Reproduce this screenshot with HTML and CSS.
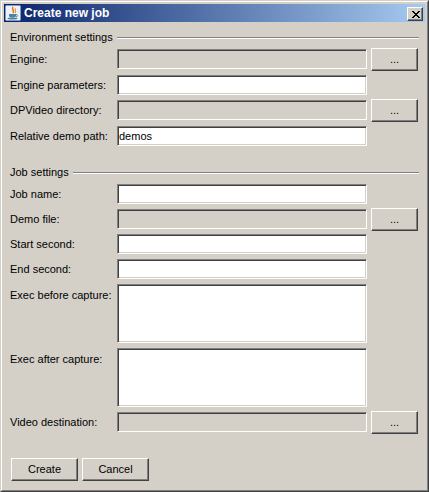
FILE: index.html
```html
<!DOCTYPE html>
<html>
<head>
<meta charset="utf-8">
<title>Create new job</title>
<link rel="stylesheet" href="styles.css">
</head>
<body>
<div class="window">
  <div class="frame">
    <div class="titlebar">
      <svg class="app-icon" viewBox="0 0 16 16" width="16" height="16">
        <rect x="0.5" y="0.5" width="15" height="15" rx="1" fill="#EEF2F8" stroke="#7F9AC8"/>
        <path d="M8 2 C6 4 10 5 8 8" stroke="#E76F00" stroke-width="1.5" fill="none"/>
        <path d="M10.5 3.5 C9.5 5 11.5 6 10 8" stroke="#E76F00" stroke-width="1" fill="none"/>
        <path d="M4 9 h7 v1.5 a3 2 0 0 1 -3 2 h-1 a3 2 0 0 1 -3 -2z" fill="#5382A1"/>
        <path d="M11 9.5 a1.5 1.2 0 0 1 0 2.4" stroke="#5382A1" fill="none"/>
        <ellipse cx="7.5" cy="13.6" rx="5" ry="1" fill="#5382A1"/>
      </svg>
      <span class="title">Create new job</span>
      <div class="close-btn">
        <svg class="close-x" viewBox="0 0 8 7" width="8" height="7" shape-rendering="crispEdges">
          <path d="M0 0h2v1H0z M6 0h2v1H6z M1 1h2v1H1z M5 1h2v1H5z M2 2h4v1H2z M3 3h2v1H3z M2 4h4v1H2z M1 5h2v1H1z M5 5h2v1H5z M0 6h2v1H0z M6 6h2v1H6z" fill="#000"/>
        </svg>
      </div>
    </div>
    <div class="content">
      <div class="section-head">
        <span class="section-title">Environment settings</span>
        <div class="rule"></div>
      </div>
      <div class="rows env">
        <div class="row">
          <div class="label">Engine:</div>
          <div class="field disabled"></div>
          <div class="btn browse">...</div>
        </div>
        <div class="row">
          <div class="label">Engine parameters:</div>
          <div class="field"></div>
        </div>
        <div class="row">
          <div class="label">DPVideo directory:</div>
          <div class="field disabled"></div>
          <div class="btn browse">...</div>
        </div>
        <div class="row">
          <div class="label">Relative demo path:</div>
          <div class="field">demos</div>
        </div>
      </div>

      <div class="section-head job-head">
        <span class="section-title">Job settings</span>
        <div class="rule"></div>
      </div>
      <div class="rows job">
        <div class="row">
          <div class="label">Job name:</div>
          <div class="field"></div>
        </div>
        <div class="row">
          <div class="label">Demo file:</div>
          <div class="field disabled"></div>
          <div class="btn browse">...</div>
        </div>
        <div class="row">
          <div class="label">Start second:</div>
          <div class="field"></div>
        </div>
        <div class="row">
          <div class="label">End second:</div>
          <div class="field"></div>
        </div>
        <div class="row tall">
          <div class="label">Exec before capture:</div>
          <div class="field area"></div>
        </div>
        <div class="row tall">
          <div class="label">Exec after capture:</div>
          <div class="field area"></div>
        </div>
        <div class="row">
          <div class="label">Video destination:</div>
          <div class="field disabled"></div>
          <div class="btn browse">...</div>
        </div>
      </div>

      <div class="actions">
        <div class="btn action">Create</div>
        <div class="btn action">Cancel</div>
      </div>
    </div>
  </div>
</div>
</body>
</html>
```

FILE: styles.css
```css
html, body {
  margin: 0;
  padding: 0;
}

body {
  width: 429px;
  height: 492px;
  background: #D4D0C8;
  font-family: "Liberation Sans", Arial, sans-serif;
  font-size: 11px;
  color: #000;
}

.window {
  box-sizing: border-box;
  width: 429px;
  height: 492px;
  border: 1px solid;
  border-color: #D4D0C8 #404040 #404040 #D4D0C8;
}

.frame {
  box-sizing: border-box;
  height: 100%;
  border: 1px solid;
  border-color: #FFFFFF #808080 #808080 #FFFFFF;
  padding: 2px;
  display: flex;
  flex-direction: column;
  background: #D4D0C8;
}

.titlebar {
  flex-shrink: 0;
  height: 18px;
  display: flex;
  align-items: center;
  background: linear-gradient(to right, #0A246A, #A6CAF0);
}

.app-icon {
  flex-shrink: 0;
  margin-left: 1px;
  margin-right: 3px;
  display: block;
}

.title {
  flex: 1;
  color: #FFFFFF;
  font-weight: bold;
  font-size: 12px;
  line-height: 18px;
  white-space: nowrap;
}

.close-btn {
  box-sizing: border-box;
  width: 16px;
  height: 14px;
  align-self: flex-start;
  margin-top: 3px;
  margin-right: 2px;
  border: 1px solid;
  border-color: #FFFFFF #404040 #404040 #FFFFFF;
  box-shadow: inset -1px -1px #808080;
  background: #D4D0C8;
  display: flex;
  align-items: center;
  justify-content: center;
}

.close-x {
  display: block;
  margin-left: 1px;
}

.content {
  flex: 1;
  padding: 8px 7px 0 6px;
  display: flex;
  flex-direction: column;
}

.section-head {
  display: flex;
  height: 14px;
  line-height: 14px;
}

.section-title {
  white-space: nowrap;
}

.rule {
  flex: 1;
  height: 0;
  margin: 7px -1px 0 4px;
  border-top: 1px solid #808080;
  border-bottom: 1px solid #FFFFFF;
}

.job-head {
  margin-top: 19px;
}

.rows {
  display: flex;
  flex-direction: column;
  margin-top: 5px;
}

.rows.env {
  gap: 5.67px;
}

.rows.job {
  gap: 5px;
}

.row {
  display: flex;
  align-items: flex-start;
  height: 20px;
}

.row.tall {
  height: 59px;
}

.label {
  width: 107px;
  flex-shrink: 0;
  line-height: 20px;
  white-space: nowrap;
}

.row.tall .label {
  padding-top: 1px;
}

.field {
  box-sizing: border-box;
  width: 250px;
  height: 20px;
  flex-shrink: 0;
  border: 1px solid;
  border-color: #808080 #FFFFFF #FFFFFF #808080;
  box-shadow: inset 1px 1px #404040, inset -1px -1px #D4D0C8;
  background: #FFFFFF;
  padding: 0 1px;
  line-height: 18px;
  white-space: nowrap;
}

.field.disabled {
  background: #D4D0C8;
}

.field.area {
  height: 59px;
}

.btn {
  box-sizing: border-box;
  height: 23px;
  border: 1px solid;
  border-color: #FFFFFF #404040 #404040 #FFFFFF;
  box-shadow: inset -1px -1px #808080;
  background: #D4D0C8;
  text-align: center;
  line-height: 21px;
  white-space: nowrap;
}

.btn.browse {
  width: 47px;
  margin-top: -1px;
  margin-left: 4px;
  flex-shrink: 0;
}

.actions {
  display: flex;
  gap: 4px;
  margin-top: 26px;
  padding-left: 1px;
}

.btn.action {
  width: 67px;
}
```
